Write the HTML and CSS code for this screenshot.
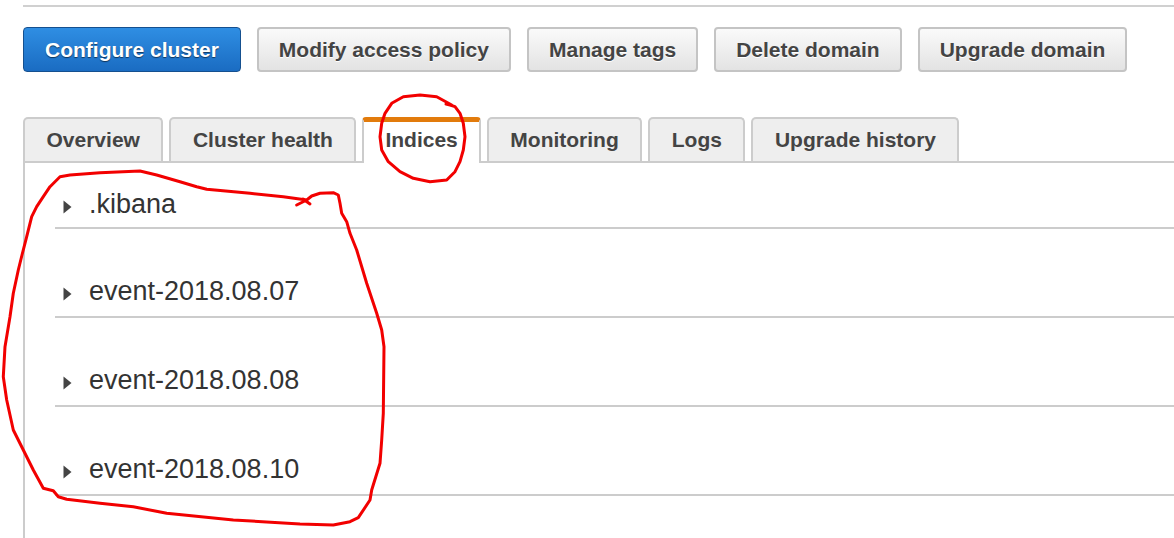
FILE: index.html
```html
<!DOCTYPE html>
<html lang="en">
<head>
<meta charset="utf-8">
<title>Domain - Indices</title>
<link rel="stylesheet" href="styles.css">
</head>
<body>
<div class="page">
  <div class="topline"></div>
  <div class="actions">
    <button class="btn btn-primary">Configure cluster</button>
    <button class="btn">Modify access policy</button>
    <button class="btn">Manage tags</button>
    <button class="btn">Delete domain</button>
    <button class="btn">Upgrade domain</button>
  </div>
  <div class="tabs">
    <div class="tab">Overview</div>
    <div class="tab">Cluster health</div>
    <div class="tab tab-active">Indices</div>
    <div class="tab">Monitoring</div>
    <div class="tab">Logs</div>
    <div class="tab">Upgrade history</div>
  </div>
  <div class="panel">
    <div class="row row-first">
      <svg class="caret" width="9" height="14" viewBox="0 0 9 14"><polygon points="0.5,0.5 8.5,7 0.5,13.5" fill="#444"/></svg>
      <span class="name">.kibana</span>
    </div>
    <div class="row">
      <svg class="caret" width="9" height="14" viewBox="0 0 9 14"><polygon points="0.5,0.5 8.5,7 0.5,13.5" fill="#444"/></svg>
      <span class="name">event-2018.08.07</span>
    </div>
    <div class="row">
      <svg class="caret" width="9" height="14" viewBox="0 0 9 14"><polygon points="0.5,0.5 8.5,7 0.5,13.5" fill="#444"/></svg>
      <span class="name">event-2018.08.08</span>
    </div>
    <div class="row">
      <svg class="caret" width="9" height="14" viewBox="0 0 9 14"><polygon points="0.5,0.5 8.5,7 0.5,13.5" fill="#444"/></svg>
      <span class="name">event-2018.08.10</span>
    </div>
  </div>
</div>
<svg class="annotations" width="1174" height="538" viewBox="0 0 1174 538">
  <path class="ink" d="M451.7,105 L436.7,96.7 L420,95 L403.3,96.7 L391.7,103.3 L385,113.3 L381.7,123.3 L380,136.7 L381.7,150 L388.3,161.7 L400,171.7 L413.3,178.3 L430,181.7 L446.7,180 L455,171.7 L460,161.7 L463.3,150 L465,136.7 L463.3,123.3 L460,113.3 L455,106.7 L450,105 L446,104"/>
  <path class="ink" d="M306.7,200 L283.3,196.7 L250,193.3 L206.7,189.3 L196.7,186.7 L180,181.7 L156.7,175 L140,171 L100,172.7 L70,175 L60,176.7 L50,186.7 L43.3,196.7 L36.7,206.7 L31.7,216.7 L26.7,236.7 L22,255 L18.3,270 L13.3,293.3 L10,316.7 L5,346.7 L3.3,376.7 L6.7,400 L13.3,430 L23.3,450 L33.3,470 L43.3,488.3 L53.3,490.7 L58.3,496.7 L66.7,499.3 L100,503.3 L133.3,506.7 L166.7,513.3 L233.3,520 L300,524 L333.3,525 L350,521.7 L358.3,517.7 L370,500 L371.7,490 L380,463.3 L381.7,440 L383.3,413.3 L384,346.7 L381.7,330 L376.7,313.3 L366.7,283.3 L356.7,250 L350,233.3 L346.7,221.7 L341.7,213.3 L340,203.3 L338.3,195 L333.3,192.7 L320,193.3 L311.7,196 L306.7,200 L296.7,205"/>
  <path class="ink" d="M303,199 L310,204"/>
</svg>
</body>
</html>
```

FILE: styles.css
```css
html, body {
  margin: 0;
  padding: 0;
  background: #fff;
}

body {
  font-family: "Liberation Sans", Arial, sans-serif;
  color: #444;
  position: relative;
  width: 1174px;
  height: 538px;
  overflow: hidden;
}

.page {
  padding-left: 23px;
  display: flex;
  flex-direction: column;
  height: 538px;
  box-sizing: border-box;
}

.topline {
  margin-top: 5px;
  height: 0;
  border-top: 2px solid #d0d0d0;
}

.actions {
  display: flex;
  gap: 16px;
  margin-top: 20px;
}

.btn {
  box-sizing: border-box;
  height: 45px;
  padding: 0 20px;
  border: 2px solid #c4c4c4;
  border-radius: 4px;
  background: linear-gradient(#fafafa, #e3e3e3);
  font-family: "Liberation Sans", Arial, sans-serif;
  font-weight: bold;
  font-size: 21px;
  color: #444;
  text-shadow: 0 1px 0 #fff;
  white-space: nowrap;
}

.btn-primary {
  padding: 0 21px;
  border: 1px solid #15508f;
  background: linear-gradient(#2f8ee3, #1a6cc2);
  color: #fff;
  text-shadow: 0 1px 1px rgba(0, 0, 0, 0.55);
}

.tabs {
  display: flex;
  align-items: flex-end;
  gap: 6px;
  margin-top: 45px;
  border-bottom: 2px solid #ccc;
}

.tab {
  box-sizing: border-box;
  height: 44px;
  padding: 0 21.5px;
  display: flex;
  align-items: center;
  background: #eee;
  border: 2px solid #ccc;
  border-bottom: none;
  border-radius: 5px 5px 0 0;
  font-weight: bold;
  font-size: 21px;
  color: #444;
  white-space: nowrap;
}

.tab-active {
  height: 46px;
  margin-bottom: -2px;
  padding: 0 21px 5px;
  background: #fff;
  border-top: 5px solid #e27b0c;
  border-radius: 4px 4px 0 0;
}

.panel {
  flex: 1;
  border-left: 2px solid #ccc;
  padding-left: 30px;
}

.row {
  display: flex;
  align-items: center;
  padding: 47px 0 10px;
  border-bottom: 2px solid #ccc;
}

.row-first {
  padding: 26px 0 8px;
}

.caret {
  margin-left: 8px;
  margin-right: 17px;
  margin-top: 6px;
  flex: none;
}

.name {
  font-size: 27px;
  line-height: 30px;
  color: #333;
}

.annotations {
  position: absolute;
  left: 0;
  top: 0;
  pointer-events: none;
}

.ink {
  fill: none;
  stroke: #f20000;
  stroke-width: 3;
  stroke-linejoin: round;
  stroke-linecap: round;
}
```
